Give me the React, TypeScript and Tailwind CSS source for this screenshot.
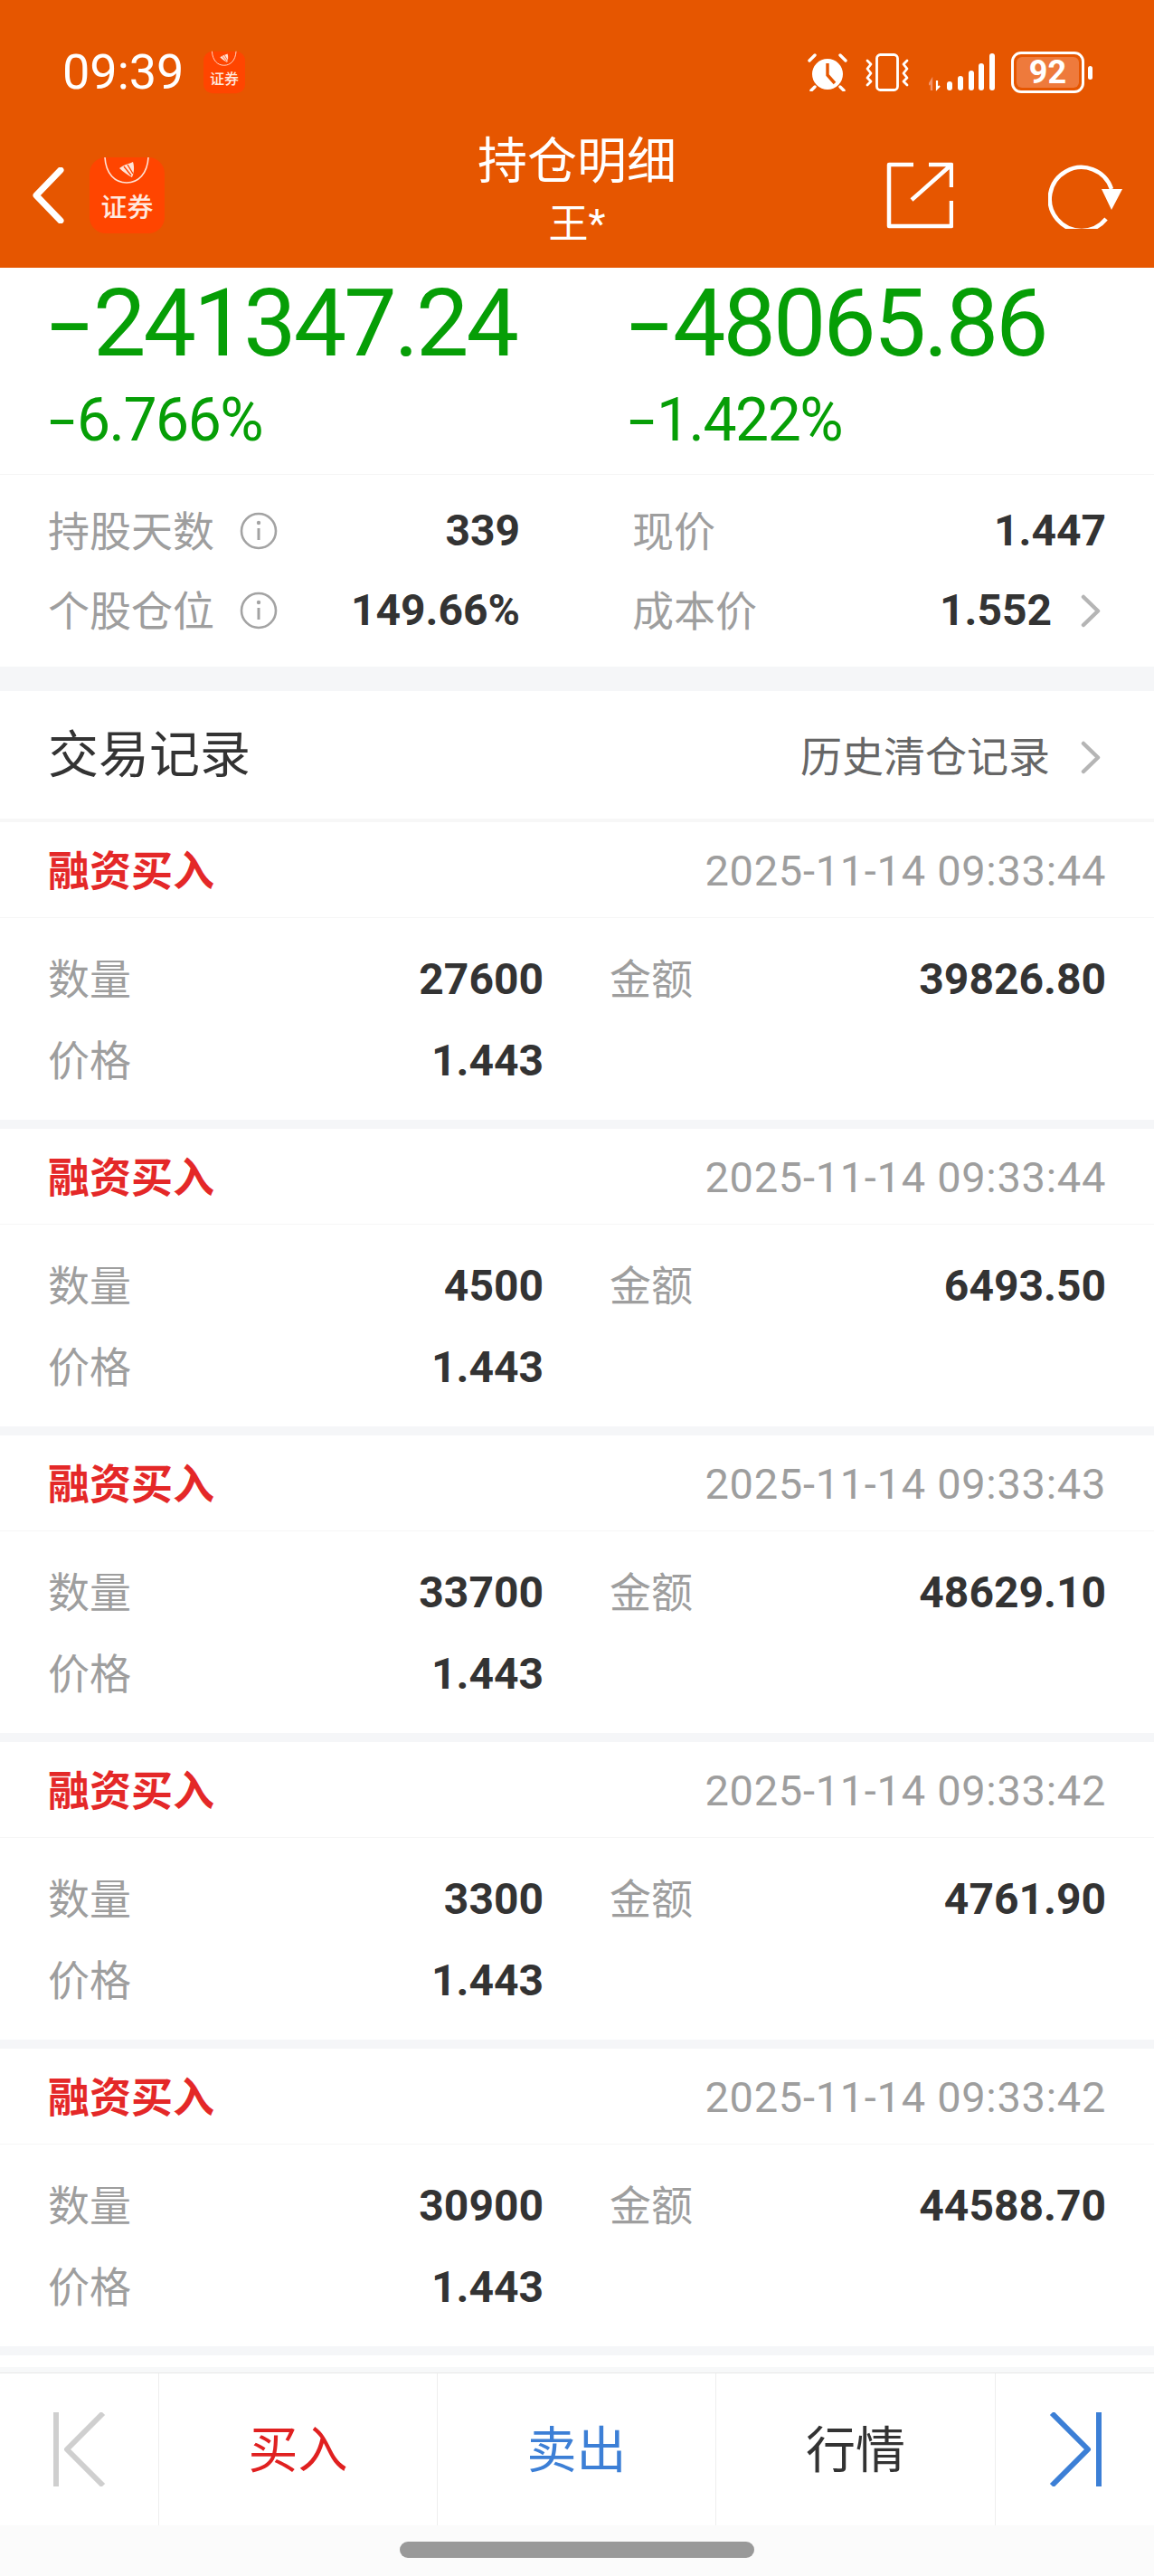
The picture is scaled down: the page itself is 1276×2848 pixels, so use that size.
const trades = [
  { time: "2025-11-14 09:33:44", qty: "27600", amount: "39826.80", price: "1.443" },
  { time: "2025-11-14 09:33:44", qty: "4500", amount: "6493.50", price: "1.443" },
  { time: "2025-11-14 09:33:43", qty: "33700", amount: "48629.10", price: "1.443" },
  { time: "2025-11-14 09:33:42", qty: "3300", amount: "4761.90", price: "1.443" },
  { time: "2025-11-14 09:33:42", qty: "30900", amount: "44588.70", price: "1.443" },
];

function AppLogo({ className }: { className: string }) {
  return (
    <svg viewBox="0 0 83 84" className={className}>
      <rect width="83" height="84" rx="18" fill="#ff4500" />
      <path d="M17 0C18 18 28 28 41 28C54 28 64 18 65 0" fill="none" stroke="#ffe3d6" strokeWidth="1.6" />
      <path d="M33 12C38 8 44 7 48 5C50 11 49 18 47 22C43 20 37 16 33 12Z" fill="#ffe3d6" />
      <path d="M38 10L46 20M42 8L48 18" stroke="#ff4500" strokeWidth="1.4" />
      <text
        x="41.5"
        y="66"
        textAnchor="middle"
        fontSize="29"
        fontWeight="500"
        fill="#ffe9df"
        fontFamily="'Noto Sans CJK SC', sans-serif"
      >
        证券
      </text>
    </svg>
  );
}

function InfoIcon() {
  return (
    <svg viewBox="0 0 42 42" className="w-[42px] h-[42px]">
      <circle cx="21" cy="21" r="19" fill="none" stroke="#a3a3a3" strokeWidth="2.6" />
      <circle cx="21" cy="12" r="2.2" fill="#a3a3a3" />
      <path d="M21 18V31" stroke="#a3a3a3" strokeWidth="3" />
    </svg>
  );
}

function Chevron() {
  return (
    <svg viewBox="0 0 22 37" className="w-[22px] h-[37px]">
      <path d="M3 3L19 18.5L3 34" fill="none" stroke="#b5b5b5" strokeWidth="4.5" strokeLinecap="round" strokeLinejoin="round" />
    </svg>
  );
}

function StatusIcons() {
  return (
    <div className="flex items-center">
      {/* alarm */}
      <svg viewBox="0 0 44 42" className="w-[44px] h-[42px]">
        <circle cx="22" cy="23" r="17" fill="#fff" />
        <path d="M22 11V24L30 33" fill="none" stroke="#e65600" strokeWidth="3.4" />
        <path d="M2 8L8 2M36 2L42 8M8 37L4 41M36 37L40 41" stroke="#fff" strokeWidth="3.4" strokeLinecap="round" />
      </svg>
      {/* vibrate */}
      <svg viewBox="0 0 50 42" className="w-[50px] h-[42px] ml-[19px]">
        <rect x="13.5" y="1.5" width="23" height="39" rx="4" fill="none" stroke="#fff" strokeWidth="2.8" />
        <path d="M3 8L7 12L3 17L7 22L3 27L7 31L3 35" fill="none" stroke="#fff" strokeWidth="2.8" strokeLinecap="round" strokeLinejoin="round" />
        <path d="M47 8L43 12L47 17L43 22L47 27L43 31L47 35" fill="none" stroke="#fff" strokeWidth="2.8" strokeLinecap="round" strokeLinejoin="round" />
      </svg>
      {/* signal */}
      <svg viewBox="0 0 73 42" className="w-[73px] h-[42px] ml-[21px]">
        <path d="M3 41V30L0 35" fill="none" stroke="#f2936a" strokeWidth="2.4" />
        <path d="M9 30V39L12 36" fill="none" stroke="#fff" strokeWidth="2.2" />
        <rect x="20" y="31" width="6" height="10" rx="3" fill="#fff" />
        <rect x="32" y="25" width="6" height="16" rx="3" fill="#fff" />
        <rect x="44" y="19" width="6" height="22" rx="3" fill="#fff" />
        <rect x="55" y="11" width="6" height="30" rx="3" fill="#fff" />
        <rect x="67" y="0" width="6" height="41" rx="3" fill="#fff" />
      </svg>
      {/* battery */}
      <div className="ml-[18px] flex items-center gap-[4px]">
        <div className="w-[81px] h-[46px] rounded-[11px] border-[3px] border-white p-[3px]">
          <div className="h-full rounded-[6px] bg-[#ee7a3c] flex items-center justify-center text-white text-[36px] font-bold leading-none">
            92
          </div>
        </div>
        <div className="w-[5px] h-[15px] rounded-full bg-white" />
      </div>
    </div>
  );
}

function BigFigure({ amount, rate }: { amount: string; rate: string }) {
  return (
    <div className="pl-[54px] text-[#069e06]">
      <div className="h-[120px] pt-[4px] flex items-center text-[104px] tracking-[-3px]">
        <span className="inline-block w-[49px] origin-left scale-x-[1.6]">-</span>
        {amount}
      </div>
      <div className="h-[92px] pt-[6px] flex items-center text-[66px] tracking-[-1.5px]">
        <span className="inline-block w-[31px] origin-left scale-x-[1.6]">-</span>
        {rate}
      </div>
      <div className="h-[16px]" />
    </div>
  );
}

function TradeItem({ time, qty, amount, price }: (typeof trades)[number]) {
  return (
    <div className="bg-white border-b-[10px] border-[#f5f6f8]">
      <div className="h-[106px] pt-[2px] flex items-center justify-between pl-[53px] pr-[53px] border-b border-[#f6f6f6]">
        <span className="text-[46px] font-bold text-[#e42828]">融资买入</span>
        <span className="text-[47px] tracking-[0.7px] text-[#9e9e9e]">{time}</span>
      </div>
      <div className="pt-[23px] pb-[20px] pl-[53px] pr-[53px] grid grid-cols-[548px_1fr] gap-x-[73px]">
        <div className="h-[90px] flex items-center justify-between">
          <span className="text-[46px] text-[#9e9e9e]">数量</span>
          <span className="text-[48px] font-bold text-[#333]">{qty}</span>
        </div>
        <div className="h-[90px] flex items-center justify-between">
          <span className="text-[46px] text-[#9e9e9e]">金额</span>
          <span className="text-[48px] font-bold text-[#333]">{amount}</span>
        </div>
        <div className="h-[90px] flex items-center justify-between">
          <span className="text-[46px] text-[#9e9e9e]">价格</span>
          <span className="text-[48px] font-bold text-[#333]">{price}</span>
        </div>
      </div>
    </div>
  );
}

export default function App() {
  return (
    <div className="w-[1276px] h-[2848px] overflow-hidden bg-white font-['Roboto','Noto_Sans_CJK_SC',sans-serif] leading-none">
      {/* cabecera */}
      <header className="h-[296px] bg-[#e65600] text-white">
        <div className="h-[160px] flex items-center justify-between pl-[69px] pr-[68px]">
          <div className="flex items-center gap-[22px]">
            <span className="text-[54px] w-[134px]">09:39</span>
            <AppLogo className="w-[46px] h-[48px]" />
          </div>
          <StatusIcons />
        </div>
        <div className="h-[112px] grid grid-cols-[1fr_auto_1fr] items-center">
          <div className="flex items-center pl-[36px] gap-[28px]">
            <svg viewBox="0 0 35 62" className="w-[35px] h-[62px]">
              <path d="M31 3L4 31L31 59" fill="none" stroke="#fff" strokeWidth="7" strokeLinecap="round" strokeLinejoin="round" />
            </svg>
            <AppLogo className="w-[83px] h-[84px]" />
          </div>
          <div className="flex flex-col items-center -mt-[12px]">
            <span className="text-[55px]">持仓明细</span>
            <span className="text-[44px] mt-[20px]">王*</span>
          </div>
          <div className="flex items-center justify-end pr-[35px] gap-[105px]">
            <svg viewBox="0 0 74 74" className="w-[74px] h-[74px]">
              <path d="M30 3H3V71H72V43M28 42L72 3M47 3H72V28" fill="none" stroke="#fff" strokeWidth="4.5" strokeLinejoin="round" />
            </svg>
            <svg viewBox="0 0 82 74" className="w-[82px] h-[74px]">
              <path d="M64 63A35 35 0 1 1 70 30" fill="none" stroke="#fff" strokeWidth="4.5" />
              <path d="M59 30H82L70 53Z" fill="#fff" />
            </svg>
          </div>
        </div>
      </header>

      {/* resumen */}
      <section className="grid grid-cols-[641px_1fr] border-b border-[#f5f5f5]">
        <BigFigure amount="241347.24" rate="6.766%" />
        <BigFigure amount="48065.86" rate="1.422%" />
      </section>
      <section className="pt-[18px] pb-[18px] pl-[53px] pr-[53px] grid grid-cols-[522px_1fr] gap-x-[124px] border-b-[27px] border-[#f5f6f8]">
        <div className="h-[88px] flex items-center">
          <span className="text-[46px] pt-[2px] text-[#9e9e9e] w-[212px]">持股天数</span>
          <InfoIcon />
          <span className="ml-auto text-[48px] font-bold text-[#333]">339</span>
        </div>
        <div className="h-[88px] flex items-center justify-between">
          <span className="text-[46px] pt-[2px] text-[#9e9e9e]">现价</span>
          <span className="text-[48px] font-bold text-[#333]">1.447</span>
        </div>
        <div className="h-[88px] flex items-center">
          <span className="text-[46px] pt-[2px] text-[#9e9e9e] w-[212px]">个股仓位</span>
          <InfoIcon />
          <span className="ml-auto text-[48px] font-bold text-[#333]">149.66%</span>
        </div>
        <div className="h-[88px] flex items-center">
          <span className="text-[46px] pt-[2px] text-[#9e9e9e]">成本价</span>
          <span className="ml-auto text-[48px] font-bold text-[#333]">1.552</span>
          <span className="ml-[32px] mr-[6px]">
            <Chevron />
          </span>
        </div>
      </section>

      {/* 交易记录 */}
      <div className="h-[145px] flex items-center justify-between pl-[53px] pr-[59px] border-b-[4px] border-[#f7f7f7]">
        <span className="text-[56px] text-[#333]">交易记录</span>
        <div className="flex items-center gap-[34px] mt-[5px]">
          <span className="text-[46px] text-[#666]">历史清仓记录</span>
          <Chevron />
        </div>
      </div>
      {trades.map((t, i) => (
        <TradeItem key={i} {...t} />
      ))}
      <div className="h-[13px] bg-white" />
      <div className="h-[6px] bg-[#f7f8f9]" />

      {/* barra inferior */}
      <nav className="h-[169px] border-t border-[#e8e8e8] bg-white grid grid-cols-[175px_308px_308px_309px_1fr] text-[55px]">
        <div className="flex items-center justify-center">
          <svg viewBox="0 0 58 82" className="w-[58px] h-[82px]">
            <path d="M3 0V82M55 1L15 41L55 81" fill="none" stroke="#cfcfcf" strokeWidth="6" strokeLinejoin="round" />
          </svg>
        </div>
        <div className="border-l border-[#eeeeee] pt-[2px] flex items-center justify-center text-[#e02020]">买入</div>
        <div className="border-l border-[#eeeeee] pt-[2px] flex items-center justify-center text-[#3c7fd6]">卖出</div>
        <div className="border-l border-[#eeeeee] pt-[2px] flex items-center justify-center text-[#333]">行情</div>
        <div className="border-l border-[#eeeeee] flex items-center justify-center">
          <svg viewBox="0 0 58 82" className="w-[58px] h-[82px]">
            <path d="M55 0V82M3 1L43 41L3 81" fill="none" stroke="#3c7fd6" strokeWidth="6" strokeLinejoin="round" />
          </svg>
        </div>
      </nav>
      <div className="h-[56px] bg-[#fbfbfb] flex justify-center pt-[18px]">
        <div className="w-[392px] h-[18px] rounded-full bg-[#999]" />
      </div>
    </div>
  );
}
